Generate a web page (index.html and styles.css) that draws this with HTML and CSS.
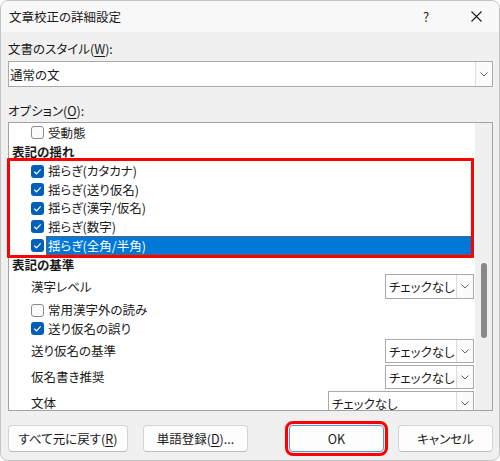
FILE: index.html
```html
<!DOCTYPE html>
<html lang="ja">
<head>
<meta charset="utf-8">
<title>文章校正の詳細設定</title>
<link rel="stylesheet" href="styles.css">
</head>
<body>
<div class="window">
  <div class="titlebar">
    <span class="title">文章校正の詳細設定</span>
    <span class="cap-btn cap-help">?</span>
    <span class="cap-btn cap-close">
      <svg width="11" height="11" viewBox="0 0 11 11"><path d="M0.5 0.5 L10.5 10.5 M10.5 0.5 L0.5 10.5" stroke="#1b1b1b" stroke-width="1.1" fill="none"/></svg>
    </span>
  </div>

  <div class="content">
    <div class="label label-style">文書のスタイル(<u>W</u>):</div>
    <div class="combo combo-wide">
      <span class="combo-text">通常の文</span>
      <span class="combo-arrow"><svg width="8" height="5" viewBox="0 0 8 5"><path d="M0.5 0.5 L4 4 L7.5 0.5" stroke="#666" fill="none"/></svg></span>
    </div>

    <div class="label label-opt">オプション(<u>O</u>):</div>
    <div class="list">
      <div class="list-items">
        <div class="row row-top">
          <span class="check"></span><span class="item">受動態</span>
        </div>
        <div class="heading heading-first">表記の揺れ</div>
        <div class="row">
          <span class="check on"><svg viewBox="0 0 13 13"><path d="M3.3 6.7 L5.5 8.8 L9.7 4.4" stroke="#fff" stroke-width="1.2" fill="none"/></svg></span><span class="item">揺らぎ(カタカナ)</span>
        </div>
        <div class="row">
          <span class="check on"><svg viewBox="0 0 13 13"><path d="M3.3 6.7 L5.5 8.8 L9.7 4.4" stroke="#fff" stroke-width="1.2" fill="none"/></svg></span><span class="item">揺らぎ(送り仮名)</span>
        </div>
        <div class="row">
          <span class="check on"><svg viewBox="0 0 13 13"><path d="M3.3 6.7 L5.5 8.8 L9.7 4.4" stroke="#fff" stroke-width="1.2" fill="none"/></svg></span><span class="item">揺らぎ(漢字/仮名)</span>
        </div>
        <div class="row">
          <span class="check on"><svg viewBox="0 0 13 13"><path d="M3.3 6.7 L5.5 8.8 L9.7 4.4" stroke="#fff" stroke-width="1.2" fill="none"/></svg></span><span class="item">揺らぎ(数字)</span>
        </div>
        <div class="row row-selected">
          <span class="check on"><svg viewBox="0 0 13 13"><path d="M3.3 6.7 L5.5 8.8 L9.7 4.4" stroke="#fff" stroke-width="1.2" fill="none"/></svg></span><span class="item selected">揺らぎ(全角/半角)</span>
        </div>
        <div class="heading">表記の基準</div>
        <div class="drop-row drop-row-first">
          <span class="drop-label">漢字レベル</span>
          <div class="combo combo-small">
            <span class="combo-text">チェックなし</span>
            <span class="combo-arrow"><svg width="8" height="5" viewBox="0 0 8 5"><path d="M0.5 0.5 L4 4 L7.5 0.5" stroke="#666" fill="none"/></svg></span>
          </div>
        </div>
        <div class="row">
          <span class="check"></span><span class="item">常用漢字外の読み</span>
        </div>
        <div class="row">
          <span class="check on"><svg viewBox="0 0 13 13"><path d="M3.3 6.7 L5.5 8.8 L9.7 4.4" stroke="#fff" stroke-width="1.2" fill="none"/></svg></span><span class="item">送り仮名の誤り</span>
        </div>
        <div class="drop-row">
          <span class="drop-label">送り仮名の基準</span>
          <div class="combo combo-small">
            <span class="combo-text">チェックなし</span>
            <span class="combo-arrow"><svg width="8" height="5" viewBox="0 0 8 5"><path d="M0.5 0.5 L4 4 L7.5 0.5" stroke="#666" fill="none"/></svg></span>
          </div>
        </div>
        <div class="drop-row">
          <span class="drop-label">仮名書き推奨</span>
          <div class="combo combo-small">
            <span class="combo-text">チェックなし</span>
            <span class="combo-arrow"><svg width="8" height="5" viewBox="0 0 8 5"><path d="M0.5 0.5 L4 4 L7.5 0.5" stroke="#666" fill="none"/></svg></span>
          </div>
        </div>
        <div class="drop-row drop-row-last">
          <span class="drop-label">文体</span>
          <div class="combo combo-medium">
            <span class="combo-text">チェックなし</span>
            <span class="combo-arrow"><svg width="8" height="5" viewBox="0 0 8 5"><path d="M0.5 0.5 L4 4 L7.5 0.5" stroke="#666" fill="none"/></svg></span>
          </div>
        </div>
      </div>
      <div class="scrollbar"><div class="thumb"></div></div>
      <div class="highlight-box"></div>
    </div>

    <div class="buttons">
      <button class="btn btn-reset">すべて元に戻す(<u>R</u>)</button>
      <button class="btn btn-dict">単語登録(<u>D</u>)...</button>
      <button class="btn btn-ok">OK</button>
      <button class="btn btn-cancel">キャンセル</button>
    </div>
  </div>
</div>
</body>
</html>
```

FILE: styles.css
```css
html, body {
  margin: 0;
  padding: 0;
  background: #ffffff;
}

body {
  font-family: "Noto Sans CJK JP", "Noto Sans", sans-serif;
  font-size: 12.5px;
  color: #1a1a1a;
  /* proportional kana, as the system UI font sets them */
  font-feature-settings: "palt" 1;
}

u {
  text-decoration: underline;
  text-underline-offset: 2px;
}

.window {
  width: 500px;
  height: 461px;
  box-sizing: border-box;
  border: 1px solid #c4c4c4;
  border-radius: 8px;
  overflow: hidden;
  background: #f0f0f0;
  display: flex;
  flex-direction: column;
}

/* caption bar */
.titlebar {
  height: 31px;
  flex: none;
  display: flex;
  align-items: center;
  background: #f8f8f8;
}

.title {
  flex: 1;
  padding-left: 8px;
  font-size: 12.5px;
  line-height: 31px;
}

.cap-btn {
  width: 46px;
  height: 31px;
  display: flex;
  align-items: center;
  justify-content: center;
}

.cap-help {
  font-size: 13px;
  color: #222;
  margin-right: 4px;
}

.cap-close svg {
  display: block;
}

/* dialog body */
.content {
  flex: 1;
  display: flex;
  flex-direction: column;
  padding: 0 6px 0 7px;
}

.label {
  height: 18px;
  line-height: 18px;
}

.label-style {
  margin-top: 8px;
}

.label-opt {
  margin-top: 15px;
}

/* combo boxes */
.combo {
  box-sizing: border-box;
  display: flex;
  background: #ffffff;
  border: 1px solid #a9a9a9;
}

.combo-wide {
  margin-top: 3px;
  height: 26px;
}

.combo-text {
  flex: 1;
  display: flex;
  align-items: center;
  padding-left: 1px;
  white-space: nowrap;
  overflow: hidden;
}

.combo-arrow {
  width: 16px;
  flex: none;
  display: flex;
  align-items: center;
  justify-content: center;
  background: #fbfbfb;
  border-left: 1px solid #dcdcdc;
}

.combo-arrow svg {
  display: block;
}

.combo-small {
  width: 89px;
  height: 24px;
}

.combo-medium {
  width: 146px;
  height: 24px;
}

.combo-small .combo-text,
.combo-medium .combo-text {
  padding-left: 3px;
}

/* options list */
.list {
  position: relative;
  margin-top: 2px;
  height: 289px;
  box-sizing: border-box;
  border: 1px solid #a3a3a3;
  background: #ffffff;
  display: flex;
}

.list-items {
  flex: 1;
  overflow: hidden;
  display: flex;
  flex-direction: column;
}

.row {
  flex: none;
  height: 18.5px;
  display: flex;
  align-items: center;
  padding-left: 22px;
}

.row-top {
  height: 19px;
}

.row-selected {
  height: 19px;
}

.check {
  width: 13px;
  height: 13px;
  box-sizing: border-box;
  border: 1px solid #8b8b8b;
  border-radius: 3px;
  background: #fbfbfb;
  flex: none;
}

.check.on {
  border: none;
  background: #005fb8;
}

.check svg {
  display: block;
  width: 13px;
  height: 13px;
}

.item {
  margin-left: 2px;
  padding-left: 2px;
  line-height: 18px;
  white-space: nowrap;
}

.item.selected {
  flex: 1;
  align-self: stretch;
  display: flex;
  align-items: center;
  margin-right: 3px;
  box-sizing: border-box;
  background: #0078d7;
  color: #ffffff;
  outline: 1px dotted #9a5a1e;
  outline-offset: -1px;
}

.heading {
  flex: none;
  height: 19px;
  line-height: 19px;
  padding-left: 3px;
  font-weight: bold;
}

.heading-first {
  height: 20px;
}

.drop-row {
  flex: none;
  height: 26px;
  display: flex;
  align-items: flex-start;
  justify-content: space-between;
  padding-left: 22px;
  padding-right: 1px;
}

.drop-row .combo {
  margin-top: 1px;
}

.drop-row-first {
  height: 27px;
}

.drop-row-first .combo {
  margin-top: 0;
  height: 25px;
}

.drop-label {
  line-height: 26px;
}

.scrollbar {
  width: 17px;
  flex: none;
  background: #f0f0f0;
}

.thumb {
  width: 6px;
  height: 75px;
  margin-top: 140px;
  margin-left: 6px;
  border-radius: 3px;
  background: #888888;
}

/* red emphasis frame over the fluctuation items */
.highlight-box {
  position: absolute;
  left: -2px;
  top: 35px;
  width: 467px;
  height: 100px;
  box-sizing: border-box;
  border: 3px solid #ff0000;
  border-radius: 1px;
  pointer-events: none;
}

/* bottom buttons */
.buttons {
  margin-top: 14px;
  display: flex;
}

.btn {
  height: 27px;
  box-sizing: border-box;
  padding: 0;
  font-family: inherit;
  font-size: 12.5px;
  font-feature-settings: "palt" 1;
  color: #1a1a1a;
  background: #fdfdfd;
  border: 1px solid #d3d3d3;
  border-bottom-color: #bdbdbd;
  border-radius: 4px;
}

.btn-reset {
  width: 120px;
}

.btn-dict {
  width: 105px;
  margin-left: 15px;
}

.btn-ok {
  width: 95px;
  margin-left: auto;
  border-color: #5b97d6;
  outline: 3px solid #ff0000;
  outline-offset: 1px;
}

.btn-cancel {
  width: 95px;
  margin-left: 14px;
}
```
